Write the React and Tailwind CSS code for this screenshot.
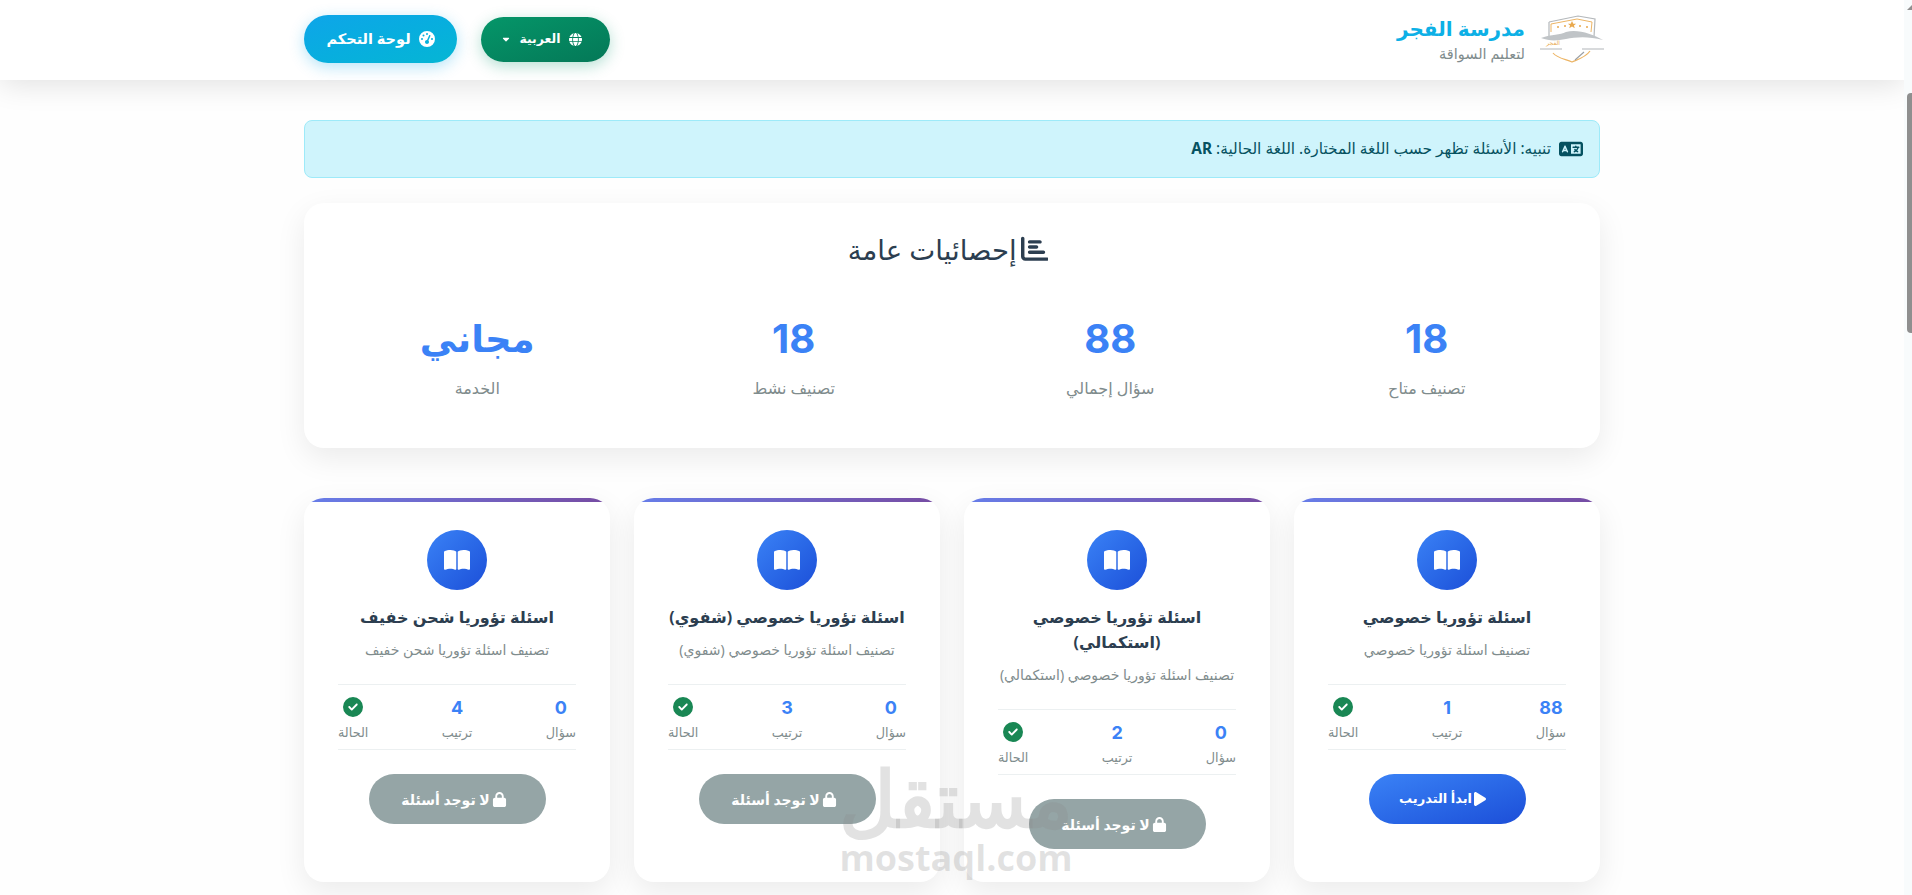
import React from 'react'
import { FaBookOpen, FaCaretDown, FaChartBar, FaCircleCheck, FaGaugeHigh, FaGlobe, FaLanguage, FaLock, FaPlay } from 'react-icons/fa6'

const stats = [
  { value: '18', label: 'تصنيف متاح' },
  { value: '88', label: 'سؤال إجمالي' },
  { value: '18', label: 'تصنيف نشط' },
  { value: 'مجاني', label: 'الخدمة', small: true },
]

const categories = [
  { title: 'اسئلة تؤوريا خصوصي', desc: 'تصنيف اسئلة تؤوريا خصوصي', count: 88, order: 1, active: true },
  { title: 'اسئلة تؤوريا خصوصي (استكمالي)', desc: 'تصنيف اسئلة تؤوريا خصوصي (استكمالي)', count: 0, order: 2 },
  { title: 'اسئلة تؤوريا خصوصي (شفوي)', desc: 'تصنيف اسئلة تؤوريا خصوصي (شفوي)', count: 0, order: 3 },
  { title: 'اسئلة تؤوريا شحن خفيف', desc: 'تصنيف اسئلة تؤوريا شحن خفيف', count: 0, order: 4 },
]

const Logo = () => (
  <svg width="64" height="48" viewBox="0 0 64 48" fill="none" className="-ml-1 -mr-1">
    <path d="M9 7 L38 1 L55 4 L54 22 M9 7 L9 22" stroke="#b4b8bb" strokeWidth="1.2" />
    <path d="M11 9 L37 4 L52 7 L51 17 M11 9 L11 17" stroke="#edb565" strokeWidth="1" />
    <path d="M32 6 l1.3 2.7 h2.8 l-2.2 1.8 l.9 2.7 l-2.8 -1.6 l-2.8 1.6 l.9 -2.7 l-2.2 -1.8 h2.8 z" fill="#e9a94e" />
    <circle cx="18" cy="12" r="1" fill="#e9a94e" /><circle cx="25" cy="11" r="1" fill="#e9a94e" />
    <circle cx="40" cy="11" r="1" fill="#e9a94e" /><circle cx="47" cy="12" r="1" fill="#e9a94e" />
    <path d="M1 23 C12 19 20 20 26 17 C38 14 52 19 63 25 C48 21 36 22 26 24 C16 26 9 26 1 23 Z" fill="#c0c4c7" />
    <path d="M0 34 H22 M42 34 H64" stroke="#d8dadc" strokeWidth="2" />
    <path d="M13 38 C17 43 25 44 32 47 C39 44 46 42 50 36" stroke="#edb565" strokeWidth="1.2" />
    <path d="M44 37 L35 45" stroke="#9a9fa4" strokeWidth="1.2" />
    <text x="20" y="30" fontSize="6" fill="#e9a94e">الفجر</text>
  </svg>
)

const Navbar = () => (
  <nav className="relative z-10 flex h-20 items-center justify-between bg-white px-[304px] pb-[2px] shadow-[0_4px_30px_rgba(0,0,0,0.12)]">
    <div className="flex items-center gap-[19px]">
      <Logo />
      <div>
        <div className="text-[20px] font-bold leading-[28px] text-[#0db0e6]">مدرسة الفجر</div>
        <div className="text-[14.5px] leading-[20px] text-[#7f8c8d]">لتعليم السواقة</div>
      </div>
    </div>
    <div className="flex items-center gap-6">
      <button className="flex h-[45px] w-[129px] items-center justify-center gap-2 rounded-full bg-gradient-to-br from-[#059669] to-[#047857] pr-2 text-[12.5px] font-semibold text-white shadow-[0_4px_15px_rgba(5,150,105,0.3)]">
        <FaGlobe className="text-[13px]" />
        <span>العربية</span>
        <FaCaretDown className="text-[10px]" />
      </button>
      <button className="flex h-12 w-[153px] items-center justify-center gap-2 rounded-full bg-gradient-to-br from-[#0ea5e9] to-[#06b6d4] text-[14.5px] font-semibold text-white shadow-[0_4px_15px_rgba(14,165,233,0.3)]">
        <FaGaugeHigh className="text-[16px]" />
        <span>لوحة التحكم</span>
      </button>
    </div>
  </nav>
)

const CategoryCard = ({ item }) => (
  <div className="relative flex flex-col items-center overflow-hidden rounded-[20px] bg-white px-[34px] pb-[33px] pt-8 text-center shadow-[0_10px_30px_rgba(0,0,0,0.08)]">
    <div className="absolute inset-x-0 top-0 h-1 bg-gradient-to-r from-[#667eea] to-[#764ba2]" />
    <div className="mb-[15px] flex h-[60px] w-[60px] items-center justify-center rounded-full bg-gradient-to-br from-[#3b82f6] to-[#1d4ed8] text-[26px] text-white">
      <FaBookOpen />
    </div>
    <h3 className="mb-2 text-[16px] font-bold leading-[25px] text-[#2c3e50]">{item.title}</h3>
    <p className="mb-[22px] text-[14px] leading-[24px] text-[#7f8c8d]">{item.desc}</p>
    <div className="mb-6 flex w-full items-center justify-between border-y border-[#ecf0f1] pb-[7px] pt-[10px]">
      <div>
        <div className="font-['Inter',sans-serif] text-[18px] font-bold leading-[26px] text-[#3b82f6]">{item.count}</div>
        <div className="mt-[1px] text-[12.8px] leading-[20px] text-[#7f8c8d]">سؤال</div>
      </div>
      <div>
        <div className="font-['Inter',sans-serif] text-[18px] font-bold leading-[26px] text-[#3b82f6]">{item.order}</div>
        <div className="mt-[1px] text-[12.8px] leading-[20px] text-[#7f8c8d]">ترتيب</div>
      </div>
      <div>
        <div className="flex h-6 items-center justify-center text-[20px] text-[#198754]"><FaCircleCheck /></div>
        <div className="mt-[3px] text-[12.8px] leading-[20px] text-[#7f8c8d]">الحالة</div>
      </div>
    </div>
    {item.active ? (
      <button className="flex h-[50px] w-[157px] items-center justify-center rounded-full bg-gradient-to-br from-[#3b82f6] to-[#1d4ed8] pr-[7px] text-[13px] font-semibold text-white">
        <FaPlay className="text-[16px]" />
        <span>ابدأ التدريب</span>
      </button>
    ) : (
      <button className="flex h-[50px] w-[177px] items-center justify-center gap-[2px] rounded-full bg-[#95a5a6] pr-[6px] text-[14px] font-semibold text-white">
        <FaLock className="text-[15px]" />
        <span>لا توجد أسئلة</span>
      </button>
    )}
  </div>
)

export default function App() {
  return (
    <div className="relative flex h-[895px] overflow-hidden bg-white font-['Noto_Sans','DejaVu_Sans',sans-serif]">
      <div dir="rtl" className="h-full flex-1 overflow-hidden bg-[#fefefe]">
        <Navbar />
        <main className="px-[304px] pt-10">
          <div className="flex h-[58px] items-center gap-2 rounded-lg border border-[#9eeaf9] bg-[#cff4fc] px-4 text-[15.4px] text-[#055160]">
            <FaLanguage className="text-[24px]" />
            <span>تنبيه: الأسئلة تظهر حسب اللغة المختارة. اللغة الحالية: <strong>AR</strong></span>
          </div>

          <section className="mt-[25px] h-[245px] rounded-[20px] bg-white px-[15px] pt-[26px] text-center shadow-[0_10px_30px_rgba(0,0,0,0.08)]">
            <h2 className="flex items-center justify-center gap-1 pr-2 text-[27.6px] leading-[40px] text-[#2c3e50]">
              <FaChartBar />
              <span>إحصائيات عامة</span>
            </h2>
            <div className="mt-10 grid grid-cols-4">
              {stats.map((s, i) => (
                <div key={i}>
                  <div className={s.small
                    ? "font-['Inter','Noto_Sans','DejaVu_Sans',sans-serif] text-[37px] font-bold leading-[60px] text-[#3b82f6]"
                    : "font-['Inter','Noto_Sans','DejaVu_Sans',sans-serif] text-[40px] font-bold leading-[60px] text-[#3b82f6]"}>{s.value}</div>
                  <div className="mt-[7px] text-[16px] leading-[24px] text-[#7f8c8d]">{s.label}</div>
                </div>
              ))}
            </div>
          </section>

          <section className="mt-[50px] grid grid-cols-4 gap-6">
            {categories.map(c => <CategoryCard key={c.order} item={c} />)}
          </section>
        </main>
      </div>

      <div className="h-full w-2 shrink-0 bg-[#f8fbfc]" />

      {/* scrollbar */}
      <div className="absolute left-[1907px] top-[93px] h-[240px] w-[5px] rounded-l bg-[#8f8f8f]" />
      <div className="absolute left-[1907px] top-[5px] h-0 w-0 border-b-[5px] border-l-[5px] border-b-[#8f8f8f] border-l-transparent" />

      {/* watermark */}
      <div dir="rtl" className="pointer-events-none absolute left-[811px] top-[747px] z-20 w-[290px] text-center font-['Open_Sans',sans-serif] text-[#8a8a8a]/25">
        <div className="text-[78px] font-bold leading-[100px]">مستقل</div>
        <div className="-mt-[9px] text-[36px] font-bold leading-[40px]" dir="ltr">mostaql.com</div>
      </div>
    </div>
  )
}
